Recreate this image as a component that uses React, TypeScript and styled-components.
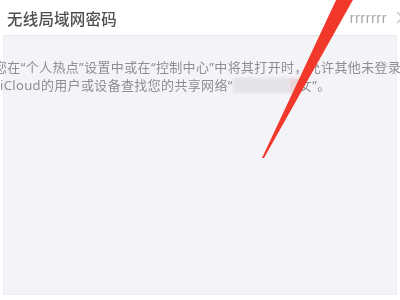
import styled, { createGlobalStyle } from 'styled-components';

const GlobalStyle = createGlobalStyle`
  html, body {
    margin: 0;
    padding: 0;
    background: #ffffff;
  }
  body {
    font-family: "Noto Sans CJK SC", "Noto Sans", sans-serif;
  }
`;

const StyledPage = styled.div`
  position: relative;
  width: 400px;
  height: 300px;
  overflow: hidden;
  background: #ffffff;
`;

const StyledHeader = styled.div`
  display: flex;
  align-items: center;
  justify-content: space-between;
  height: 35px;
  padding-left: 7px;
  box-sizing: border-box;
`;

const StyledTitle = styled.h1`
  margin: 0;
  font-size: 15.5px;
  font-weight: 500;
  color: #505050;
  letter-spacing: 0.2px;
  filter: blur(0.3px);
`;

const StyledValue = styled.div`
  display: flex;
  align-items: center;
  gap: 9px;
  margin-right: -4px;
  color: #a8a8ac;
  font-family: "Liberation Sans", Arial, sans-serif;
  font-size: 14.5px;
  letter-spacing: 0.5px;
  filter: blur(0.3px);
`;

const StyledPanel = styled.div`
  margin: 0 3px;
  height: 260px;
  background: #f4f4f8;
  border-top: 1px solid #e6e6ea;
  border-left: 1px solid #ededf1;
  border-right: 1px solid #ededf1;
  border-bottom: 1px solid #ededf1;
  box-sizing: border-box;
`;

const StyledNote = styled.p`
  margin: 0 0 0 -4px;
  padding-top: 22px;
  font-family: "Noto Sans", "Noto Sans CJK SC", sans-serif;
  font-size: 13px;
  line-height: 18px;
  letter-spacing: 0.35px;
  color: #8e8e92;
  text-indent: -6px;
  white-space: nowrap;
  filter: blur(0.35px);
`;

const StyledMask = styled.span<{ $width: number; $tint: string }>`
  display: inline-block;
  width: ${({ $width }) => $width}px;
  height: 15px;
  vertical-align: -3px;
  background: ${({ $tint }) => $tint};
  filter: blur(1px);
`;

const StyledArrow = styled.svg`
  position: absolute;
  left: 0;
  top: 0;
  pointer-events: none;
`;

const App = () => {
  return (
    <>
      <GlobalStyle />
      <StyledPage>
        <StyledHeader>
          <StyledTitle>无线局域网密码</StyledTitle>
          <StyledValue>
            rrrrrrr
            <svg width="8" height="13" viewBox="0 0 8 13">
              <polyline points="1,1 6.5,6.5 1,12" fill="none" stroke="#c8c8cc" strokeWidth="1.5" />
            </svg>
          </StyledValue>
        </StyledHeader>
        <StyledPanel>
          <StyledNote>
            您在“个人热点”设置中或在“控制中心”中将其打开时，允许其他未登录
            <br />
            iCloud的用户或设备查找您的共享网络“
            <StyledMask $width={56} $tint="#e4e4e8" />
            <StyledMask $width={10} $tint="#ead6d8" />
            女”。
          </StyledNote>
        </StyledPanel>
        <StyledArrow width="400" height="300" viewBox="0 0 400 300">
          <polygon points="262,158 337,-2 354,-2 264,158" fill="#f2372b" />
        </StyledArrow>
      </StyledPage>
    </>
  );
};

export default App;
